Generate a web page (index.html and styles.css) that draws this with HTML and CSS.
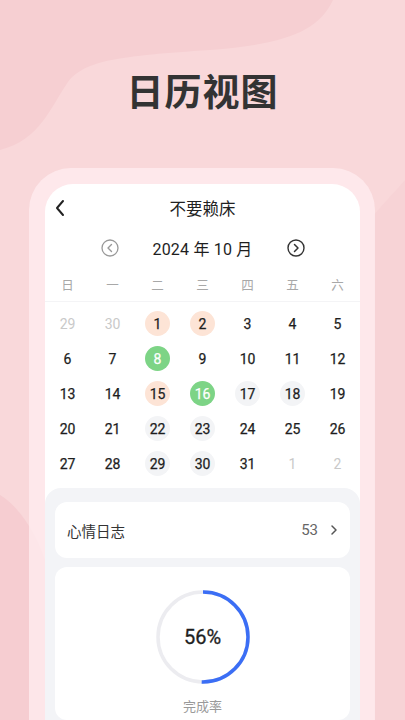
FILE: index.html
```html
<!DOCTYPE html>
<html lang="zh-CN">
<head>
<meta charset="utf-8">
<title>日历视图</title>
<link rel="stylesheet" href="styles.css">
</head>
<body>
<div class="page">
  <svg class="bg" width="405" height="720" viewBox="0 0 405 720" aria-hidden="true">
    <rect width="405" height="720" fill="#f9d8da"/>
    <path d="M0 0 H333 C318 32 285 44 210 50 C120 56 85 60 68 82 C50 108 40 140 0 150 Z" fill="#f6cfd2"/>
    <path d="M405 180 C392 195 382 205 374 215 L374 720 H405 Z" fill="#f7d3d6"/>
    <path d="M0 495 C40 520 70 600 60 720 H0 Z" fill="#f6cdd1"/>
  </svg>
  <h1 class="hero">日历视图</h1>
  <div class="frame">
    <div class="screen">
      <div class="topbar">
        <svg class="back" width="12" height="18" viewBox="0 0 12 18"><path d="M9 2 L3 9 L9 16" fill="none" stroke="#222" stroke-width="2" stroke-linecap="round" stroke-linejoin="round"/></svg>
        <div class="topbar-title">不要赖床</div>
      </div>
      <div class="month">
        <svg class="nav" width="18" height="18" viewBox="0 0 18 18"><circle cx="9" cy="9" r="8" fill="none" stroke="#999" stroke-width="1.3"/><path d="M10.5 5.5 L7 9 L10.5 12.5" fill="none" stroke="#999" stroke-width="1.4" stroke-linecap="round" stroke-linejoin="round"/></svg>
        <div class="month-label">2024 年 10 月</div>
        <svg class="nav" width="18" height="18" viewBox="0 0 18 18"><circle cx="9" cy="9" r="8" fill="none" stroke="#333" stroke-width="1.4"/><path d="M7.5 5.5 L11 9 L7.5 12.5" fill="none" stroke="#333" stroke-width="1.5" stroke-linecap="round" stroke-linejoin="round"/></svg>
      </div>
      <div class="weekdays">
        <span>日</span><span>一</span><span>二</span><span>三</span><span>四</span><span>五</span><span>六</span>
      </div>
      <div class="days">
        <span class="d out">29</span><span class="d out">30</span><span class="d peach">1</span><span class="d peach">2</span><span class="d">3</span><span class="d">4</span><span class="d">5</span>
        <span class="d">6</span><span class="d">7</span><span class="d green">8</span><span class="d">9</span><span class="d">10</span><span class="d">11</span><span class="d">12</span>
        <span class="d">13</span><span class="d">14</span><span class="d peach">15</span><span class="d green">16</span><span class="d grey">17</span><span class="d grey">18</span><span class="d">19</span>
        <span class="d">20</span><span class="d">21</span><span class="d grey">22</span><span class="d grey">23</span><span class="d">24</span><span class="d">25</span><span class="d">26</span>
        <span class="d">27</span><span class="d">28</span><span class="d grey">29</span><span class="d grey">30</span><span class="d">31</span><span class="d out">1</span><span class="d out">2</span>
      </div>
      <div class="panel">
        <div class="card row">
          <span class="row-label">心情日志</span>
          <span class="row-right"><span class="row-count">53</span>
            <svg width="8" height="12" viewBox="0 0 8 12"><path d="M2 2 L6 6 L2 10" fill="none" stroke="#555" stroke-width="1.5" stroke-linecap="round" stroke-linejoin="round"/></svg>
          </span>
        </div>
        <div class="card stats">
          <div class="ring">
            <svg width="96" height="96" viewBox="0 0 96 96">
              <circle cx="48" cy="48" r="45" fill="none" stroke="#ececf0" stroke-width="3.5"/>
              <circle cx="48" cy="48" r="45" fill="none" stroke="#3b6ef5" stroke-width="3.5" stroke-dasharray="142.5 400" transform="rotate(-90 48 48)"/>
            </svg>
            <span class="ring-value">56%</span>
          </div>
          <div class="ring-label">完成率</div>
        </div>
      </div>
    </div>
  </div>
</div>
</body>
</html>
```

FILE: styles.css
```css
* { box-sizing: border-box; }
html, body { margin: 0; padding: 0; }
body {
  width: 405px;
  height: 720px;
  overflow: hidden;
  font-family: Roboto, "Noto Sans CJK SC", sans-serif;
  color: #333;
}
.page {
  position: relative;
  width: 405px;
  height: 720px;
  display: flex;
  flex-direction: column;
  align-items: center;
}
.bg {
  position: absolute;
  left: 0;
  top: 0;
  z-index: 0;
}
.hero {
  position: relative;
  z-index: 1;
  margin: 68px 0 0;
  height: 44px;
  line-height: 44px;
  font-family: "Noto Sans CJK SC", sans-serif;
  font-size: 37px;
  font-weight: 700;
  color: #333;
  letter-spacing: 1px;
}
.frame {
  position: relative;
  z-index: 1;
  margin-top: 56px;
  width: 346px;
  align-self: flex-start;
  margin-left: 29px;
  flex: 1;
  padding: 16px 15px 0 16px;
  border-radius: 42px 42px 0 0;
  background: rgba(255, 238, 240, 0.75);
}
.screen {
  height: 100%;
  background: #fff;
  border-radius: 28px 28px 0 0;
  display: flex;
  flex-direction: column;
  overflow: hidden;
}
.topbar {
  height: 48px;
  display: flex;
  align-items: center;
  justify-content: center;
  position: relative;
}
.back {
  position: absolute;
  left: 9px;
  top: 15px;
}
.topbar-title {
  font-family: "Noto Sans CJK SC", sans-serif;
  font-size: 16.5px;
  color: #222;
}
.month {
  height: 32px;
  display: flex;
  align-items: center;
  justify-content: center;
}
.month-label {
  width: 168px;
  text-align: center;
  font-size: 16px;
  font-weight: 400;
  color: #1e1e1e;
  letter-spacing: 0.2px;
}
.nav { display: block; }
.weekdays {
  margin-top: 4px;
  height: 34px;
  display: grid;
  grid-template-columns: repeat(7, 1fr);
  align-items: center;
  border-bottom: 1px solid #f4f4f6;
}
.weekdays span {
  text-align: center;
  font-family: "Noto Sans CJK SC", sans-serif;
  font-size: 12.5px;
  color: #a8a8a8;
}
.days {
  padding-top: 4px;
  display: grid;
  grid-template-columns: repeat(7, 45px);
  grid-auto-rows: 35px;
  justify-items: center;
  align-items: center;
}
.d {
  width: 25px;
  height: 25px;
  border-radius: 50%;
  display: flex;
  align-items: center;
  justify-content: center;
  font-size: 14px;
  font-weight: 400;
  color: #1e1e1e;
  -webkit-text-stroke: 0.25px #1e1e1e;
}
.d.out { color: #c9c9c9; -webkit-text-stroke: 0; }
.d.peach { background: #fde4d6; }
.d.green { background: #7dd486; color: #fff; -webkit-text-stroke: 0.25px #fff; }
.d.grey { background: #f3f4f6; }
.panel {
  margin-top: 7px;
  flex: 1;
  background: #f3f4f7;
  border-radius: 16px 16px 0 0;
  padding: 14px 10px 0;
  display: flex;
  flex-direction: column;
  gap: 9px;
}
.card {
  background: #fff;
  border-radius: 12px;
}
.row {
  height: 56px;
  display: flex;
  align-items: center;
  justify-content: space-between;
  padding: 0 12px;
}
.row-label {
  font-family: "Noto Sans CJK SC", sans-serif;
  font-size: 14.5px;
  color: #333;
}
.row-right {
  display: flex;
  align-items: center;
  gap: 12px;
}
.row-count {
  font-size: 15px;
  color: #666;
}
.row-right svg { display: block; }
.stats {
  flex: 1;
  display: flex;
  flex-direction: column;
  align-items: center;
  padding-top: 22px;
}
.ring {
  position: relative;
  width: 96px;
  height: 96px;
}
.ring svg { display: block; }
.ring-value {
  position: absolute;
  inset: 0;
  display: flex;
  align-items: center;
  justify-content: center;
  font-size: 20px;
  font-weight: 400;
  color: #1e1e1e;
  -webkit-text-stroke: 0.3px #1e1e1e;
}
.ring-label {
  margin-top: 11px;
  font-family: "Noto Sans CJK SC", sans-serif;
  font-size: 13px;
  color: #9a9a9a;
}
```
